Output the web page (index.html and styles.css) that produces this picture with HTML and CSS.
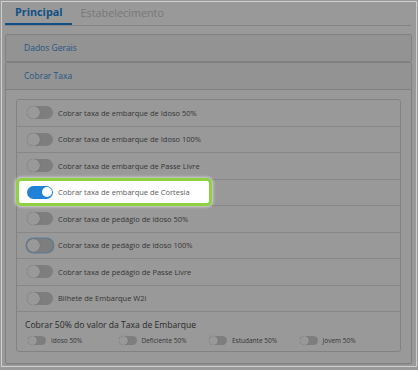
FILE: index.html
```html
<!DOCTYPE html>
<html lang="pt">
<head>
    <meta charset="UTF-8">
    <meta name="viewport" content="width=device-width, initial-scale=1.0">
    <title>Cobrar Taxa</title>
    <link rel="stylesheet" href="styles.css">
</head>
<body>

    <div class="frame">

        <div class="tabs">
            <a class="tab active">Principal</a>
            <a class="tab">Estabelecimento</a>
        </div>

        <div class="accordion">
            <div class="panel">
                <div class="panel-head">Dados Gerais</div>
            </div>
            <div class="panel">
                <div class="panel-head">Cobrar Taxa</div>
                <div class="panel-body">
                    <div class="options">
                        <div class="option"><span class="switch"></span><span class="label">Cobrar taxa de embarque de Idoso 50%</span></div>
                        <div class="option"><span class="switch"></span><span class="label">Cobrar taxa de embarque de Idoso 100%</span></div>
                        <div class="option"><span class="switch"></span><span class="label">Cobrar taxa de embarque de Passe Livre</span></div>
                        <div class="option">
                            <div class="spotlight">
                                <span class="switch on"></span><span class="label">Cobrar taxa de embarque de Cortesia</span>
                            </div>
                        </div>
                        <div class="option"><span class="switch"></span><span class="label">Cobrar taxa de pedágio de idoso 50%</span></div>
                        <div class="option"><span class="switch focus"></span><span class="label">Cobrar taxa de pedágio de idoso 100%</span></div>
                        <div class="option"><span class="switch"></span><span class="label">Cobrar taxa de pedágio de Passe Livre</span></div>
                        <div class="option"><span class="switch"></span><span class="label">Bilhete de Embarque W2i</span></div>

                        <div class="half">
                            <div class="half-title">Cobrar 50% do valor da Taxa de Embarque</div>
                            <div class="half-grid">
                                <div class="half-item"><span class="switch small"></span>Idoso 50%</div>
                                <div class="half-item"><span class="switch small"></span>Deficiente 50%</div>
                                <div class="half-item"><span class="switch small"></span>Estudante 50%</div>
                                <div class="half-item"><span class="switch small"></span>Jovem 50%</div>
                            </div>
                        </div>
                    </div>
                </div>
            </div>
        </div>

        <!-- tour overlay, the highlighted option sits above it -->
        <div class="dim"></div>
    </div>

</body>
</html>
```

FILE: styles.css
```css
body {
    font-family: "Open Sans", Arial, sans-serif;
    background-color: #999;
    margin: 1px;
    padding: 0;
}
.frame {
    position: relative;
    width: 414px;
    height: 364px;
    border: 1px solid #d0d0d0;
    background-color: #fff;
    overflow: hidden;
}
.dim {
    position: absolute;
    top: 0;
    left: 0;
    right: 0;
    bottom: 0;
    background-color: rgba(0, 0, 0, 0.4);
    z-index: 1;
}

/* tabs */
.tabs {
    display: flex;
    margin: 0 5px 0 3px;
    height: 23px;
    border-bottom: 1px solid #dcdcdc;
}
.tab {
    display: block;
    padding: 0 9px 0 9px;
    line-height: 21px;
    font-size: 10.8px;
    color: #c9c9c9;
}
.tab.active {
    font-weight: bold;
    color: #1a86e0;
    border-bottom: 2px solid #1a86e0;
    padding: 0 9px 0 10px;
    line-height: 20px;
}

/* accordion */
.accordion {
    margin: 8px 4px 0 3px;
}
.panel {
    border: 1px solid #d6d6d6;
    border-radius: 2px;
    box-shadow: 0 1px 1px rgba(0, 0, 0, 0.06);
}
.panel-head {
    height: 26px;
    line-height: 26px;
    padding: 0 18px;
    font-size: 8.5px;
    color: #3d8fdc;
    background-color: #f6f6f6;
}
.panel-body {
    border-top: 1px solid #d6d6d6;
    padding: 9px 10px 11px 10px;
}
.options {
    border: 1px solid #d9d9d9;
    border-radius: 3px;
}
.option {
    display: flex;
    align-items: center;
    height: 25.5px;
    padding-left: 10px;
    border-bottom: 1px solid #e2e2e2;
    font-size: 7.5px;
    color: #5a5a5a;
}
.label {
    margin-left: 5px;
}
.spotlight {
    position: relative;
    z-index: 2;
    display: flex;
    align-items: center;
    box-sizing: border-box;
    height: 28px;
    margin-left: -11px;
    padding: 0 19px 0 8px;
    background-color: #fff;
    border: 3px solid #8ed141;
    border-radius: 5px;
    box-shadow: 0 0 3px 1px rgba(255, 255, 255, 0.6);
}

/* switches */
.switch {
    position: relative;
    display: inline-block;
    flex-shrink: 0;
    width: 26px;
    height: 13px;
    border-radius: 7px;
    background-color: #d2d2d2;
}
.switch::after {
    content: "";
    position: absolute;
    top: 0;
    left: 0;
    width: 13px;
    height: 13px;
    border-radius: 50%;
    background-color: #fff;
    box-shadow: 0 0 1px rgba(0, 0, 0, 0.3);
}
.switch.on {
    background-color: #2180d8;
}
.switch.on::after {
    left: auto;
    right: 1.5px;
    top: 1.5px;
    width: 10px;
    height: 10px;
    box-shadow: none;
}
.switch.focus {
    box-shadow: 0 0 0 1.5px #a7cdee;
}
.switch.small {
    width: 18px;
    height: 9px;
    margin-right: 5px;
}
.switch.small::after {
    width: 9px;
    height: 9px;
}

/* 50% section */
.half {
    padding: 7px 10px 6px 8px;
}
.half-title {
    font-size: 8.6px;
    line-height: 12px;
    color: #474747;
}
.half-grid {
    display: grid;
    grid-template-columns: repeat(4, 1fr);
    margin-top: 5px;
    padding-left: 3px;
}
.half-item {
    display: flex;
    align-items: center;
    font-size: 6.5px;
    color: #5a5a5a;
}
```
